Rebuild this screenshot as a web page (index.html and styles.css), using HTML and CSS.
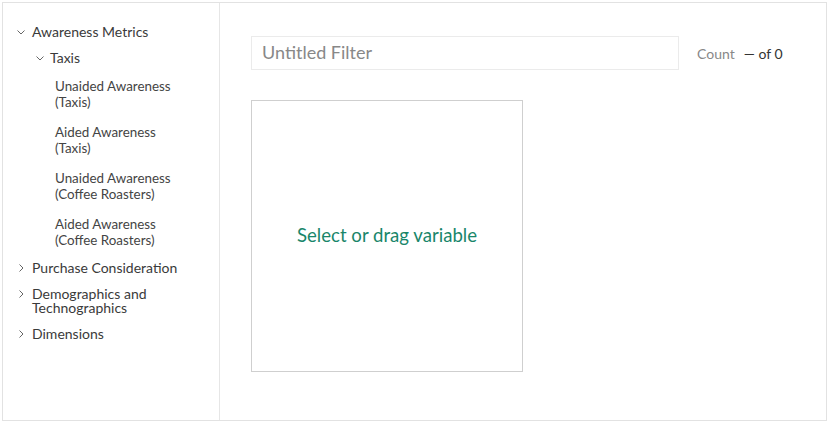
FILE: index.html
```html
<!DOCTYPE html>
<html>
<head>
<meta charset="utf-8">
<link rel="stylesheet" href="styles.css">
</head>
<body>
<div class="frame">
  <aside class="sidebar">
    <div class="node open">
      <div class="row"><span class="chev"><svg width="8" height="5" viewBox="0 0 8 5"><path d="M0.5 0.5 L4 4 L7.5 0.5" fill="none" stroke="#666" stroke-width="1"/></svg></span><span class="label">Awareness Metrics</span></div>
      <div class="children">
        <div class="node open sub">
          <div class="row"><span class="chev"><svg width="8" height="5" viewBox="0 0 8 5"><path d="M0.5 0.5 L4 4 L7.5 0.5" fill="none" stroke="#666" stroke-width="1"/></svg></span><span class="label">Taxis</span></div>
          <div class="leaves">
            <div class="leaf">Unaided Awareness (Taxis)</div>
            <div class="leaf">Aided Awareness (Taxis)</div>
            <div class="leaf">Unaided Awareness (Coffee Roasters)</div>
            <div class="leaf">Aided Awareness (Coffee Roasters)</div>
          </div>
        </div>
      </div>
    </div>
    <div class="node closed">
      <div class="row"><span class="chev"><svg width="5" height="8" viewBox="0 0 5 8"><path d="M0.5 0.5 L4 4 L0.5 7.5" fill="none" stroke="#666" stroke-width="1"/></svg></span><span class="label">Purchase Consideration</span></div>
    </div>
    <div class="node closed">
      <div class="row"><span class="chev"><svg width="5" height="8" viewBox="0 0 5 8"><path d="M0.5 0.5 L4 4 L0.5 7.5" fill="none" stroke="#666" stroke-width="1"/></svg></span><span class="label">Demographics and Technographics</span></div>
    </div>
    <div class="node closed">
      <div class="row"><span class="chev"><svg width="5" height="8" viewBox="0 0 5 8"><path d="M0.5 0.5 L4 4 L0.5 7.5" fill="none" stroke="#666" stroke-width="1"/></svg></span><span class="label">Dimensions</span></div>
    </div>
  </aside>
  <main class="main">
    <div class="toolbar">
      <input class="title-input" type="text" placeholder="Untitled Filter">
      <div class="count"><span class="count-label">Count</span><span class="count-value">— of 0</span></div>
    </div>
    <div class="dropzone"><span class="drop-text">Select or drag variable</span></div>
  </main>
</div>
</body>
</html>
```

FILE: styles.css
```css
* { box-sizing: border-box; }
html, body { margin: 0; padding: 0; background: #fff; }
body { font-family: Lato, "Open Sans", sans-serif; color: #333; }

.frame {
  margin: 2px;
  width: 825px;
  height: 419px;
  border: 1px solid #e2e2e2;
  display: flex;
}

.sidebar {
  width: 217px;
  flex: none;
  border-right: 1px solid #e6e6e6;
  padding: 22px 8px 0 14px;
  display: flex;
  flex-direction: column;
}

.node.closed { margin-top: 12px; }
.node.open + .node.closed { margin-top: 13px; }

.row {
  display: flex;
  align-items: flex-start;
  font-size: 14px;
  line-height: 14px;
  color: #3a3a3a;
}
.chev {
  width: 15px;
  flex: none;
  height: 14px;
  display: flex;
  align-items: center;
}
.closed .chev { padding-left: 2px; }

.children { margin-top: 12px; padding-left: 19px; }
.sub .chev { width: 14px; }
.leaves {
  margin-top: 13px;
  padding-left: 19px;
  display: flex;
  flex-direction: column;
  gap: 14px;
}
.leaf {
  font-size: 13.4px;
  line-height: 16px;
  color: #444;
  max-width: 132px;
}

.main {
  flex: 1;
  padding: 33px 0 0 31px;
}
.toolbar {
  display: flex;
  align-items: center;
  gap: 18px;
}
.title-input {
  width: 428px;
  height: 34px;
  border: 1px solid #ebebeb;
  padding: 0 10px 2px;
  font-family: inherit;
  font-size: 18px;
  color: #333;
  outline: none;
}
.title-input::placeholder { color: #888; }
.count { font-size: 14px; display: flex; gap: 9px; }
.count-label { color: #888; }
.count-value { color: #333; }

.dropzone {
  margin-top: 30px;
  width: 272px;
  height: 272px;
  border: 1px solid #cfcfcf;
  display: flex;
  align-items: center;
  justify-content: center;
}
.drop-text {
  color: #19866a;
  font-size: 18.6px;
  line-height: 22px;
  margin-top: -3px;
}
```
